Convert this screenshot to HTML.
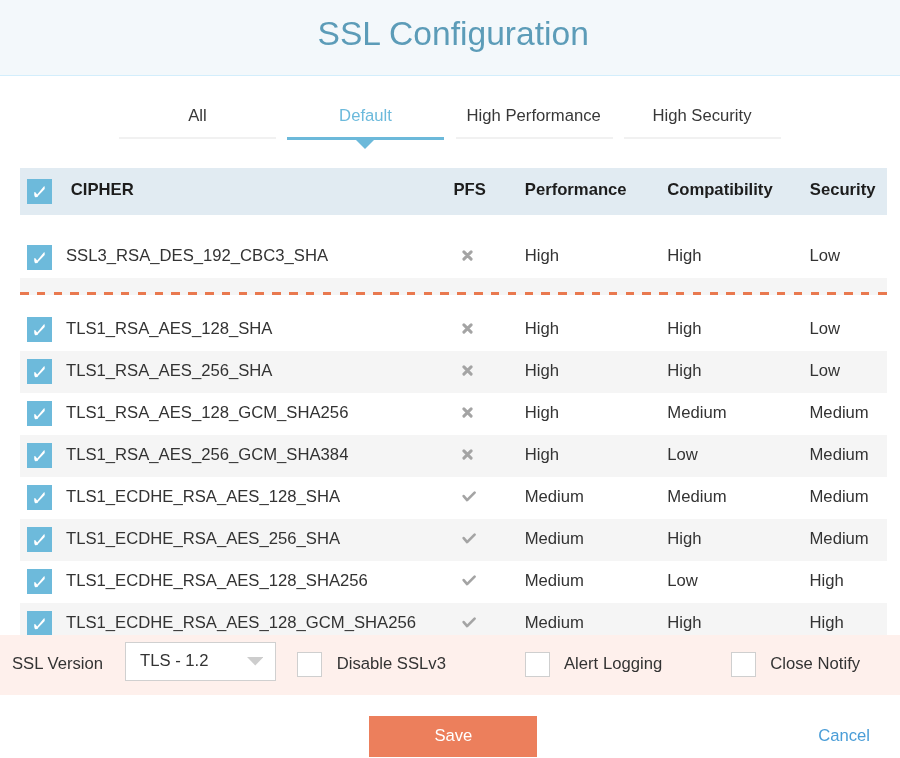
<!DOCTYPE html>
<html><head><meta charset="utf-8">
<style>
*{box-sizing:border-box;margin:0;padding:0}
html,body{width:900px;height:758px;overflow:hidden;background:#fff}
body{position:relative;-webkit-font-smoothing:antialiased;will-change:transform;font-family:"Liberation Sans",sans-serif;font-size:16.667px;color:#333}
.a{position:absolute;white-space:nowrap;line-height:20px}
#hdr{position:absolute;left:0;top:0;width:900px;background:#f3f8fb;border-bottom:1.67px solid #d3eefc;height:75.67px}
#title{position:absolute;left:3.2px;width:900px;text-align:center;top:14.3px;font-size:33.6px;line-height:40px;color:#5c9cb8}
.tab{position:absolute;top:0;width:157px;height:140px}
.tab .u{position:absolute;left:0;top:137px;width:157px;height:1.67px;background:#f1f1f1}
.tab .t{position:absolute;left:0;width:157px;text-align:center;top:106.3px;line-height:20px;color:#383838}
.tab.on .u{height:3px;background:#6cb9da}
.tab.on .t{color:#6cbadc}
.tri{position:absolute;left:355.8px;top:140px;width:0;height:0;border-left:9.5px solid transparent;border-right:9.5px solid transparent;border-top:9.8px solid #6cb9da}
#th{position:absolute;left:20px;top:167.8px;width:867px;height:47.6px;background:#e1ebf2}
.th{position:absolute;top:180px;font-weight:bold;color:#1d1d1d;line-height:20px}
.cb{position:absolute;left:27px;width:25px;height:25px;background:#6dbadb}
.cb svg{position:absolute;left:0;top:0}
.row{position:absolute;left:20px;width:867px;height:41.8px}
.row.g{background:#f5f5f5}
.c{position:absolute;line-height:20px;white-space:nowrap}
#sep{position:absolute;left:20px;top:278px;width:867px;height:17.2px;background:#f5f5f5}
#dash{position:absolute;left:20px;top:292px;width:867px;height:3px;background:linear-gradient(to right,#e9794f,#e9794f) right top/9px 3px no-repeat,repeating-linear-gradient(to right,#e9794f 0,#e9794f 8.5px,#f5f5f5 8.5px,#f5f5f5 16.82px)}
#pink{position:absolute;left:0;top:634.8px;width:900px;height:60px;background:#fef0ec}
#sel{position:absolute;left:125px;top:642px;width:151px;height:39px;background:#fff;border:1px solid #d0d0d0}
.ck{position:absolute;top:652px;width:25px;height:25px;background:#fff;border:1px solid #cfcfcf}
#save{position:absolute;left:369.4px;top:716px;width:168px;height:41px;background:#ec7f5c;color:#fff;text-align:center;line-height:39px}
#cancel{position:absolute;left:818.2px;top:725.8px;color:#4a9dd7;line-height:20px}
</style></head><body>
<div id="hdr"><div id="title">SSL Configuration</div></div>

<div class="tab" style="left:119px"><div class="u"></div><div class="t">All</div></div>
<div class="tab on" style="left:287px"><div class="u"></div><div class="t">Default</div></div>
<div class="tab" style="left:456px"><div class="u"></div><div class="t" style="left:-0.8px">High Performance</div></div>
<div class="tab" style="left:624px"><div class="u"></div><div class="t" style="left:-0.5px">High Security</div></div>
<div class="tri"></div>

<div id="th"></div>
<div class="cb" style="top:179px"><svg width="25" height="25" viewBox="0 0 25 25"><path d="M7.3,13.3 Q7.6,12.7 8.1,13.1 L10.2,15.4 L16.8,7.5 Q17.2,7.1 17.7,7.4 L17.7,10.0 L11.0,16.9 L10.6,18.1 L8.2,18.2 Q7.4,17.6 7.2,15.6 Z" fill="#fff"/></svg></div>
<div class="th" style="left:70.8px">CIPHER</div>
<div class="th" style="left:453.4px">PFS</div>
<div class="th" style="left:524.8px">Performance</div>
<div class="th" style="left:667.2px">Compatibility</div>
<div class="th" style="left:809.8px">Security</div>

<!-- ROWS -->
<div class="cb" style="top:244.900px"><svg width="25" height="25" viewBox="0 0 25 25"><path d="M7.3,13.3 Q7.6,12.7 8.1,13.1 L10.2,15.4 L16.8,7.5 Q17.2,7.1 17.7,7.4 L17.7,10.0 L11.0,16.9 L10.6,18.1 L8.2,18.2 Q7.4,17.6 7.2,15.6 Z" fill="#fff"/></svg></div>
<div class="c" style="left:66px;top:245.700px">SSL3_RSA_DES_192_CBC3_SHA</div>
<div class="c" style="left:462px;top:250.200px;line-height:0"><svg class="ic" width="11" height="11" viewBox="0 0 11 11"><path d="M1.9,1.9 L9.1,9.1 M9.1,1.9 L1.9,9.1" stroke="#a4a4a4" stroke-width="3" stroke-linecap="round"/></svg></div>
<div class="c" style="left:524.7px;top:245.700px">High</div>
<div class="c" style="left:667.3px;top:245.700px">High</div>
<div class="c" style="left:809.5px;top:245.700px">Low</div>
<div id="sep"></div><div id="dash"></div>
<div class="cb" style="top:317.200px"><svg width="25" height="25" viewBox="0 0 25 25"><path d="M7.3,13.3 Q7.6,12.7 8.1,13.1 L10.2,15.4 L16.8,7.5 Q17.2,7.1 17.7,7.4 L17.7,10.0 L11.0,16.9 L10.6,18.1 L8.2,18.2 Q7.4,17.6 7.2,15.6 Z" fill="#fff"/></svg></div>
<div class="c" style="left:66px;top:319.000px">TLS1_RSA_AES_128_SHA</div>
<div class="c" style="left:462px;top:322.500px;line-height:0"><svg class="ic" width="11" height="11" viewBox="0 0 11 11"><path d="M1.9,1.9 L9.1,9.1 M9.1,1.9 L1.9,9.1" stroke="#a4a4a4" stroke-width="3" stroke-linecap="round"/></svg></div>
<div class="c" style="left:524.7px;top:319.000px">High</div>
<div class="c" style="left:667.3px;top:319.000px">High</div>
<div class="c" style="left:809.5px;top:319.000px">Low</div>
<div class="row g" style="top:351.000px"></div>
<div class="cb" style="top:359.200px"><svg width="25" height="25" viewBox="0 0 25 25"><path d="M7.3,13.3 Q7.6,12.7 8.1,13.1 L10.2,15.4 L16.8,7.5 Q17.2,7.1 17.7,7.4 L17.7,10.0 L11.0,16.9 L10.6,18.1 L8.2,18.2 Q7.4,17.6 7.2,15.6 Z" fill="#fff"/></svg></div>
<div class="c" style="left:66px;top:361.000px">TLS1_RSA_AES_256_SHA</div>
<div class="c" style="left:462px;top:364.500px;line-height:0"><svg class="ic" width="11" height="11" viewBox="0 0 11 11"><path d="M1.9,1.9 L9.1,9.1 M9.1,1.9 L1.9,9.1" stroke="#a4a4a4" stroke-width="3" stroke-linecap="round"/></svg></div>
<div class="c" style="left:524.7px;top:361.000px">High</div>
<div class="c" style="left:667.3px;top:361.000px">High</div>
<div class="c" style="left:809.5px;top:361.000px">Low</div>
<div class="cb" style="top:401.200px"><svg width="25" height="25" viewBox="0 0 25 25"><path d="M7.3,13.3 Q7.6,12.7 8.1,13.1 L10.2,15.4 L16.8,7.5 Q17.2,7.1 17.7,7.4 L17.7,10.0 L11.0,16.9 L10.6,18.1 L8.2,18.2 Q7.4,17.6 7.2,15.6 Z" fill="#fff"/></svg></div>
<div class="c" style="left:66px;top:403.000px">TLS1_RSA_AES_128_GCM_SHA256</div>
<div class="c" style="left:462px;top:406.500px;line-height:0"><svg class="ic" width="11" height="11" viewBox="0 0 11 11"><path d="M1.9,1.9 L9.1,9.1 M9.1,1.9 L1.9,9.1" stroke="#a4a4a4" stroke-width="3" stroke-linecap="round"/></svg></div>
<div class="c" style="left:524.7px;top:403.000px">High</div>
<div class="c" style="left:667.3px;top:403.000px">Medium</div>
<div class="c" style="left:809.5px;top:403.000px">Medium</div>
<div class="row g" style="top:435.000px"></div>
<div class="cb" style="top:443.200px"><svg width="25" height="25" viewBox="0 0 25 25"><path d="M7.3,13.3 Q7.6,12.7 8.1,13.1 L10.2,15.4 L16.8,7.5 Q17.2,7.1 17.7,7.4 L17.7,10.0 L11.0,16.9 L10.6,18.1 L8.2,18.2 Q7.4,17.6 7.2,15.6 Z" fill="#fff"/></svg></div>
<div class="c" style="left:66px;top:445.000px">TLS1_RSA_AES_256_GCM_SHA384</div>
<div class="c" style="left:462px;top:448.500px;line-height:0"><svg class="ic" width="11" height="11" viewBox="0 0 11 11"><path d="M1.9,1.9 L9.1,9.1 M9.1,1.9 L1.9,9.1" stroke="#a4a4a4" stroke-width="3" stroke-linecap="round"/></svg></div>
<div class="c" style="left:524.7px;top:445.000px">High</div>
<div class="c" style="left:667.3px;top:445.000px">Low</div>
<div class="c" style="left:809.5px;top:445.000px">Medium</div>
<div class="cb" style="top:485.200px"><svg width="25" height="25" viewBox="0 0 25 25"><path d="M7.3,13.3 Q7.6,12.7 8.1,13.1 L10.2,15.4 L16.8,7.5 Q17.2,7.1 17.7,7.4 L17.7,10.0 L11.0,16.9 L10.6,18.1 L8.2,18.2 Q7.4,17.6 7.2,15.6 Z" fill="#fff"/></svg></div>
<div class="c" style="left:66px;top:487.000px">TLS1_ECDHE_RSA_AES_128_SHA</div>
<div class="c" style="left:462px;top:491.000px;line-height:0"><svg class="ic" width="14" height="11" viewBox="0 0 14 11"><path d="M1.7,5.1 L5.1,9.1 L12.6,1.6" fill="none" stroke="#a4a4a4" stroke-width="2.6" stroke-linecap="round" stroke-linejoin="round"/></svg></div>
<div class="c" style="left:524.7px;top:487.000px">Medium</div>
<div class="c" style="left:667.3px;top:487.000px">Medium</div>
<div class="c" style="left:809.5px;top:487.000px">Medium</div>
<div class="row g" style="top:519.000px"></div>
<div class="cb" style="top:527.200px"><svg width="25" height="25" viewBox="0 0 25 25"><path d="M7.3,13.3 Q7.6,12.7 8.1,13.1 L10.2,15.4 L16.8,7.5 Q17.2,7.1 17.7,7.4 L17.7,10.0 L11.0,16.9 L10.6,18.1 L8.2,18.2 Q7.4,17.6 7.2,15.6 Z" fill="#fff"/></svg></div>
<div class="c" style="left:66px;top:529.000px">TLS1_ECDHE_RSA_AES_256_SHA</div>
<div class="c" style="left:462px;top:533.000px;line-height:0"><svg class="ic" width="14" height="11" viewBox="0 0 14 11"><path d="M1.7,5.1 L5.1,9.1 L12.6,1.6" fill="none" stroke="#a4a4a4" stroke-width="2.6" stroke-linecap="round" stroke-linejoin="round"/></svg></div>
<div class="c" style="left:524.7px;top:529.000px">Medium</div>
<div class="c" style="left:667.3px;top:529.000px">High</div>
<div class="c" style="left:809.5px;top:529.000px">Medium</div>
<div class="cb" style="top:569.200px"><svg width="25" height="25" viewBox="0 0 25 25"><path d="M7.3,13.3 Q7.6,12.7 8.1,13.1 L10.2,15.4 L16.8,7.5 Q17.2,7.1 17.7,7.4 L17.7,10.0 L11.0,16.9 L10.6,18.1 L8.2,18.2 Q7.4,17.6 7.2,15.6 Z" fill="#fff"/></svg></div>
<div class="c" style="left:66px;top:571.000px">TLS1_ECDHE_RSA_AES_128_SHA256</div>
<div class="c" style="left:462px;top:575.000px;line-height:0"><svg class="ic" width="14" height="11" viewBox="0 0 14 11"><path d="M1.7,5.1 L5.1,9.1 L12.6,1.6" fill="none" stroke="#a4a4a4" stroke-width="2.6" stroke-linecap="round" stroke-linejoin="round"/></svg></div>
<div class="c" style="left:524.7px;top:571.000px">Medium</div>
<div class="c" style="left:667.3px;top:571.000px">Low</div>
<div class="c" style="left:809.5px;top:571.000px">High</div>
<div class="row g" style="top:603.000px"></div>
<div class="cb" style="top:611.200px"><svg width="25" height="25" viewBox="0 0 25 25"><path d="M7.3,13.3 Q7.6,12.7 8.1,13.1 L10.2,15.4 L16.8,7.5 Q17.2,7.1 17.7,7.4 L17.7,10.0 L11.0,16.9 L10.6,18.1 L8.2,18.2 Q7.4,17.6 7.2,15.6 Z" fill="#fff"/></svg></div>
<div class="c" style="left:66px;top:613.000px">TLS1_ECDHE_RSA_AES_128_GCM_SHA256</div>
<div class="c" style="left:462px;top:617.000px;line-height:0"><svg class="ic" width="14" height="11" viewBox="0 0 14 11"><path d="M1.7,5.1 L5.1,9.1 L12.6,1.6" fill="none" stroke="#a4a4a4" stroke-width="2.6" stroke-linecap="round" stroke-linejoin="round"/></svg></div>
<div class="c" style="left:524.7px;top:613.000px">Medium</div>
<div class="c" style="left:667.3px;top:613.000px">High</div>
<div class="c" style="left:809.5px;top:613.000px">High</div>
<div id="pink"></div>
<div class="a" style="left:12px;top:654px">SSL Version</div>
<div id="sel"></div>
<div class="a" style="left:140px;top:651px;color:#333">TLS - 1.2</div>
<svg style="position:absolute;left:246.5px;top:657.3px" width="16.5" height="8.5" viewBox="0 0 16.5 8.5"><polygon points="0,0 16.5,0 8.25,8.5" fill="#cdcdcd"/></svg>
<div class="ck" style="left:297px"></div>
<div class="a" style="left:336.7px;top:654px">Disable SSLv3</div>
<div class="ck" style="left:525px"></div>
<div class="a" style="left:564px;top:654px">Alert Logging</div>
<div class="ck" style="left:731px"></div>
<div class="a" style="left:770.3px;top:654px">Close Notify</div>
<div id="save">Save</div>
<div id="cancel">Cancel</div>
</body></html>
